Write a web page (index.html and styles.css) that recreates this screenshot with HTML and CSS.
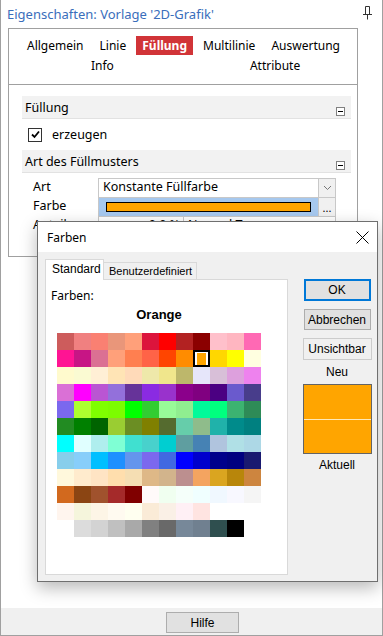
FILE: index.html
```html
<!DOCTYPE html>
<html lang="de">
<head>
<meta charset="UTF-8">
<meta name="viewport" content="width=device-width, initial-scale=1.0">
<title>Eigenschaften</title>
<link rel="stylesheet" href="styles.css">
</head>
<body>
<div class="window">
    <div class="title">
        <span>Eigenschaften: Vorlage '2D-Grafik'</span>
        <svg class="pin" width="11" height="14" viewBox="0 0 11 14">
            <path d="M3.5 0.5h4v8h-4z M1 8.5h9 M5.5 8.5v5" fill="none" stroke="#333" stroke-width="1"/>
        </svg>
    </div>
    <div class="content">
        <div class="panel">
            <div class="tabs">
                <div class="tab-row first">
                    <span class="tab">Allgemein</span>
                    <span class="tab">Linie</span>
                    <span class="tab active">Füllung</span>
                    <span class="tab">Multilinie</span>
                    <span class="tab">Auswertung</span>
                </div>
                <div class="tab-row second">
                    <span class="tab">Info</span>
                    <span class="tab">Attribute</span>
                </div>
            </div>

            <div class="section-head">
                <span>Füllung</span>
                <span class="collapse"></span>
            </div>
            <div class="check-row">
                <span class="checkbox">
                    <svg width="11" height="11" viewBox="0 0 11 11"><path d="M2 5.5l2.5 2.5 4.5-5.5" fill="none" stroke="#000" stroke-width="1.8"/></svg>
                </span>
                <span>erzeugen</span>
            </div>

            <div class="section-head">
                <span>Art des Füllmusters</span>
                <span class="collapse"></span>
            </div>
            <div class="props">
                <div class="prop">
                    <span class="prop-label">Art</span>
                    <span class="prop-value">Konstante Füllfarbe</span>
                    <span class="prop-btn">
                        <svg width="9" height="6" viewBox="0 0 9 6"><path d="M1 1l3.5 3.5 3.5-3.5" fill="none" stroke="#777" stroke-width="1"/></svg>
                    </span>
                </div>
                <div class="prop">
                    <span class="prop-label">Farbe</span>
                    <span class="prop-value selected"><span class="color-bar"></span></span>
                    <span class="prop-btn">...</span>
                </div>
                <div class="prop">
                    <span class="prop-label">Anteil</span>
                    <span class="prop-value split">
                        <span class="num">0,0 %</span>
                        <span class="txt">Normal T</span>
                    </span>
                </div>
            </div>
        </div>
    </div>
    <div class="footer">
        <button class="btn help">Hilfe</button>
    </div>

    <div class="dialog">
        <div class="dialog-title">
            <span>Farben</span>
            <svg width="13" height="13" viewBox="0 0 13 13"><path d="M0.5 0.5l12 12 M12.5 0.5l-12 12" stroke="#000" stroke-width="1"/></svg>
        </div>
        <div class="dialog-body">
            <div class="dialog-left">
                <div class="dtabs">
                    <span class="dtab active">Standard</span>
                    <span class="dtab">Benutzerdefiniert</span>
                </div>
                <div class="dtab-panel">
                    <div class="colors-label">Farben:</div>
                    <div class="color-name">Orange</div>
                    <div class="palette" id="palette"></div>
                </div>
            </div>
            <div class="dialog-right">
                <button class="btn default">OK</button>
                <button class="btn">Abbrechen</button>
                <button class="btn light">Unsichtbar</button>
                <div class="caption">Neu</div>
                <div class="preview">
                    <div class="half"></div>
                    <div class="half"></div>
                </div>
                <div class="caption">Aktuell</div>
            </div>
        </div>
    </div>
</div>

<script>
    const colors = [
        "#CD5C5C", "#F08080", "#FA8072", "#E9967A", "#FFA07A", "#DC143C", "#FF0000", "#B22222", "#8B0000", "#FFC0CB", "#FFB6C1", "#FF69B4",
        "#FF1493", "#C71585", "#DB7093", "#FFA07A", "#FF7F50", "#FF6347", "#FF4500", "#FF8C00", "#FFA500", "#FFD700", "#FFFF00", "#FFFFE0",
        "#FFFACD", "#FAFAD2", "#FFEFD5", "#FFE4B5", "#FFDAB9", "#EEE8AA", "#F0E68C", "#BDB76B", "#E6E6FA", "#D8BFD8", "#DDA0DD", "#EE82EE",
        "#DA70D6", "#FF00FF", "#BA55D3", "#9370DB", "#663399", "#8A2BE2", "#9932CC", "#8B008B", "#800080", "#4B0082", "#6A5ACD", "#483D8B",
        "#7B68EE", "#ADFF2F", "#7FFF00", "#7CFC00", "#00FF00", "#32CD32", "#98FB98", "#90EE90", "#00FA9A", "#00FF7F", "#3CB371", "#2E8B57",
        "#228B22", "#008000", "#006400", "#9ACD32", "#6B8E23", "#808000", "#556B2F", "#66CDAA", "#8FBC8B", "#20B2AA", "#008B8B", "#008080",
        "#00FFFF", "#E0FFFF", "#AFEEEE", "#7FFFD4", "#40E0D0", "#48D1CC", "#00CED1", "#5F9EA0", "#4682B4", "#B0C4DE", "#B0E0E6", "#ADD8E6",
        "#87CEEB", "#87CEFA", "#00BFFF", "#1E90FF", "#6495ED", "#7B68EE", "#4169E1", "#0000FF", "#0000CD", "#00008B", "#000080", "#191970",
        "#FFF8DC", "#FFEBCD", "#FFE4C4", "#FFDEAD", "#F5DEB3", "#DEB887", "#D2B48C", "#BC8F8F", "#F4A460", "#DAA520", "#B8860B", "#CD853F",
        "#D2691E", "#8B4513", "#A0522D", "#A52A2A", "#800000", "#FFFAFA", "#F0FFF0", "#F5FFFA", "#F0FFFF", "#F0F8FF", "#F8F8FF", "#F5F5F5",
        "#FFF5EE", "#F5F5DC", "#FDF5E6", "#FFFAF0", "#FFFFF0", "#FAEBD7", "#FAF0E6", "#FFF0F5", "#FFE4E1", "#FFFFFF", "#FFFFFF", "#FFFFFF",
        "#FFFFFF", "#DCDCDC", "#D3D3D3", "#C0C0C0", "#A9A9A9", "#808080", "#696969", "#778899", "#708090", "#2F4F4F", "#000000", "#FFFFFF"
    ];
    const palette = document.getElementById("palette");

    colors.forEach((c, i) => {
        const cell = document.createElement("span");
        cell.className = "cell";
        if (i === 20) {
            cell.classList.add("picked"); // Orange is the current colour
            const inner = document.createElement("span");
            inner.style.background = c;
            cell.appendChild(inner);
        } else {
            cell.style.background = c;
        }
        palette.appendChild(cell);
    });
</script>
</body>
</html>
```

FILE: styles.css
```css
* {
    margin: 0;
    padding: 0;
    box-sizing: border-box;
}
body {
    width: 383px;
    height: 636px;
    background: #ffffff;
    font-family: "Noto Sans", sans-serif;
    font-size: 12px;
    color: #000;
    overflow: hidden;
}
.window {
    position: relative;
    width: 383px;
    height: 636px;
    border: 1px solid #a0a0a0;
    border-top: none;
    display: flex;
    flex-direction: column;
}
.title {
    height: 28px;
    display: flex;
    align-items: center;
    justify-content: space-between;
    padding: 0 9px 0 6px;
    color: #3a6ebb;
    font-size: 13px;
}
.pin {
    margin-bottom: 2px;
}
.content {
    flex: 1;
    padding: 0 24px 0 7px;
}
.panel {
    height: 229px;
    border: 1px solid #a0a0a0;
}

/* tabs of the property panel */
.tabs {
    height: 56px;
    padding-top: 6px;
    border-bottom: 1px solid #a0a0a0;
}
.tab-row {
    display: flex;
    height: 20px;
    align-items: center;
}
.tab-row.first {
    padding: 0 11px 0 12px;
    justify-content: space-between;
}
.tab-row.second {
    padding-left: 76px;
    gap: 124px;
}
.tab {
    padding: 0 6px;
    line-height: 19px;
    font-size: 12px;
}
.tab.active {
    background: #d13438;
    color: #fff;
    font-weight: bold;
}

/* sections */
.section-head {
    margin: 11px 6px 0 13px;
    height: 23px;
    background: #f2f2f2;
    border-bottom: 1px solid #e2e2e2;
    display: flex;
    align-items: center;
    justify-content: space-between;
    padding-left: 3px;
    font-size: 12.5px;
}
.section-head + .check-row + .section-head {
    margin-top: 0;
}
.collapse {
    width: 9px;
    height: 9px;
    border: 1px solid #808080;
    background: #fff;
    align-self: flex-end;
    margin: 0 6px 2px 0;
    position: relative;
}
.collapse::after {
    content: "";
    position: absolute;
    left: 1px;
    right: 1px;
    top: 3px;
    height: 1px;
    background: #000;
}
.check-row {
    height: 31px;
    display: flex;
    align-items: center;
    gap: 10px;
    padding-left: 19px;
    font-size: 12.5px;
}
.checkbox {
    width: 14px;
    height: 14px;
    border: 1px solid #333;
    display: flex;
    align-items: center;
    justify-content: center;
}

/* property grid */
.props {
    margin: 5px 21px 0 13px;
}
.prop {
    display: flex;
    height: 19px;
    font-size: 12.5px;
}
.prop-label {
    width: 76px;
    padding-left: 11px;
    line-height: 18px;
}
.prop-value {
    flex: 1;
    border: 1px solid #c8c8c8;
    border-right: none;
    padding-left: 4px;
    line-height: 16px;
    margin-bottom: -1px;
}
.prop-value.selected {
    background: #a6c8ee;
    display: flex;
    align-items: center;
    padding: 0 7px;
}
.color-bar {
    flex: 1;
    height: 10px;
    background: #ffa500;
    border: 1px solid #000;
}
.prop-value.split {
    display: flex;
    border-right: 1px solid #c8c8c8;
    padding: 0;
}
.split .num {
    width: 85px;
    text-align: right;
    padding-right: 3px;
    border-right: 1px solid #c8c8c8;
}
.split .txt {
    padding-left: 4px;
}
.prop-btn {
    width: 18px;
    border: 1px solid #c8c8c8;
    background: #f0f0f0;
    display: flex;
    align-items: center;
    justify-content: center;
    font-size: 11px;
    margin-bottom: -1px;
}

/* bottom bar */
.footer {
    height: 27px;
    background: #f0f0f0;
    padding: 4px 0 0 165px;
}
.btn {
    display: block;
    font-family: "Liberation Sans", Arial, sans-serif;
    font-size: 12px;
    background: #e1e1e1;
    border: 1px solid #adadad;
    color: #000;
}
.help {
    width: 73px;
    height: 21px;
}

/* colour dialog */
.dialog {
    position: absolute;
    left: 36px;
    top: 221px;
    width: 341px;
    height: 361px;
    border: 1px solid #6f6f6f;
    background: #f0f0f0;
    box-shadow: 0 6px 16px rgba(0, 0, 0, 0.28);
    font-family: "Liberation Sans", Arial, sans-serif;
    font-size: 12px;
}
.dialog-title {
    height: 30px;
    background: #fff;
    display: flex;
    align-items: center;
    justify-content: space-between;
    padding: 0 8px 0 9px;
    font-family: "Noto Sans", sans-serif;
    font-size: 12px;
}
.dialog-body {
    display: flex;
    padding: 7px 0 0 7px;
}
.dialog-left {
    width: 243px;
}
.dtabs {
    display: flex;
    align-items: flex-end;
    height: 20px;
}
.dtab {
    height: 17px;
    width: 93px;
    padding-left: 5px;
    border: 1px solid #d9d9d9;
    border-bottom: none;
    line-height: 17px;
    font-size: 11px;
}
.dtab.active {
    height: 21px;
    width: 59px;
    background: #fff;
    padding: 0 6px;
    line-height: 19px;
    margin-bottom: -1px;
    position: relative;
    font-size: 12px;
}
.dtab + .dtab {
    border-left: none;
}
.dtab-panel {
    height: 296px;
    background: #fff;
    border: 1px solid #d9d9d9;
    padding: 9px 0 0 11px;
}
.colors-label {
    font-family: "Noto Sans", sans-serif;
    font-size: 12px;
    line-height: 14px;
    margin-left: -6px;
}
.color-name {
    width: 204px;
    text-align: center;
    font-weight: bold;
    font-size: 13px;
    margin-top: 4px;
    height: 26px;
}
.palette {
    display: grid;
    grid-template-columns: repeat(12, 17px);
    grid-auto-rows: 17px;
}
.cell.picked {
    border: 2px solid #000;
    background: #fff;
    display: flex;
    align-items: center;
    justify-content: center;
}
.cell.picked span {
    width: 9px;
    height: 12px;
}
.dialog-right {
    width: 68px;
    margin-left: 15px;
    padding-top: 20px;
    display: flex;
    flex-direction: column;
    align-items: center;
}
.dialog-right .btn {
    width: 67px;
    height: 21px;
    margin-bottom: 8px;
}
.dialog-right .btn.default {
    height: 22px;
    border: 2px solid #0078d7;
}
.dialog-right .btn.light {
    width: 69px;
    height: 22px;
    background: #f0f0f0;
    border-color: #cccccc;
    margin-bottom: 5px;
}
.caption {
    line-height: 15px;
    margin-bottom: 4px;
}
.preview {
    width: 69px;
    height: 70px;
    border: 1px solid #646464;
    display: flex;
    flex-direction: column;
    margin-bottom: 4px;
}
.preview .half {
    flex: 1;
    background: #ffa500;
}
.preview .half + .half {
    border-top: 1px solid #ffe9b8;
}
```
